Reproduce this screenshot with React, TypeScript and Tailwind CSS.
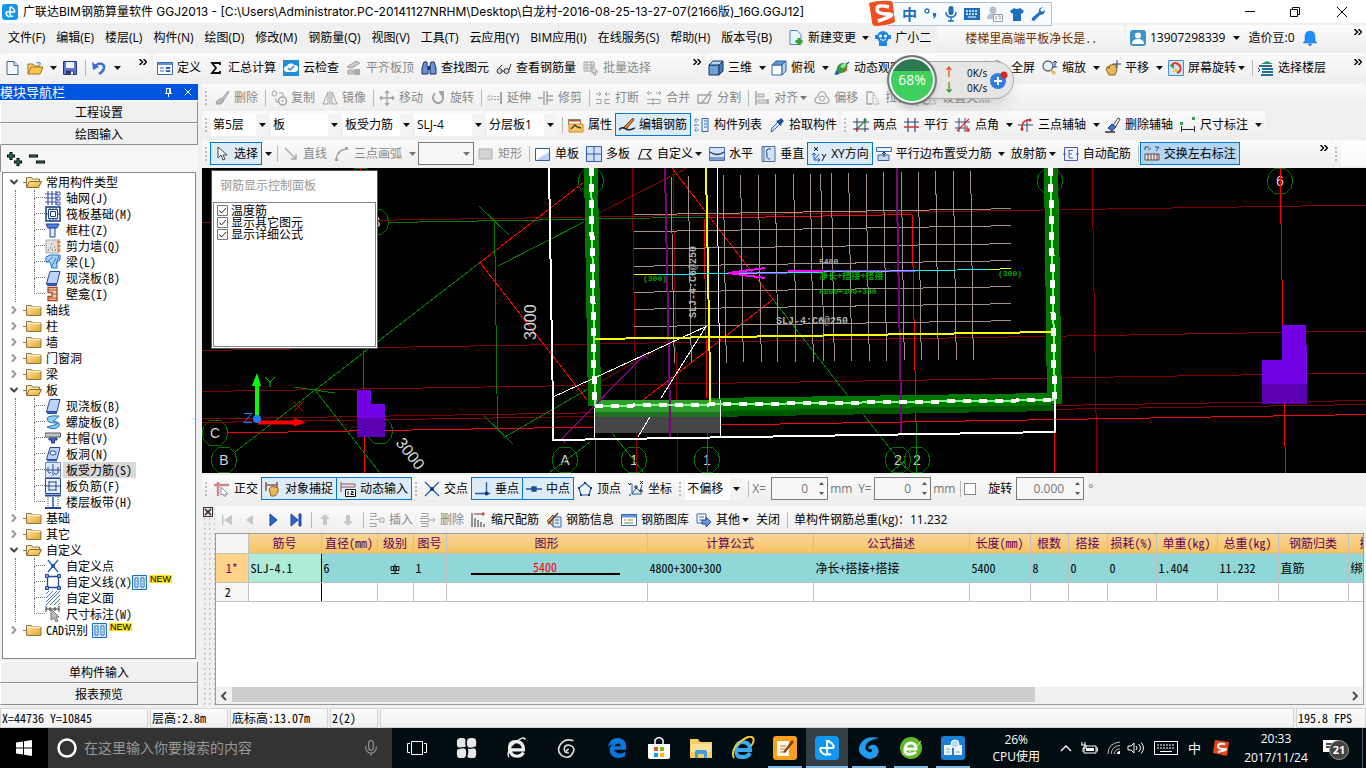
import type { ReactNode } from 'react';
import clsx from 'clsx';
import { ChevronDown, ChevronRight, Mic, X } from 'lucide-react';

const song = "font-['Noto_Sans_CJK_SC',sans-serif] [font-feature-settings:'hwid']";

const gray = '#a3a3a3';
const blue = '#2458b8';

const icons: Record<string, ReactNode> = {
  doc: <><path d="M3 1.500h7l4 4v9H3z" fill="#f4f9ff" stroke="#46648c" /><path d="M10 1.500v4h4" fill="#cfe0f5" stroke="#46648c" /></>,
  open: <><path d="M1 14V4h5l1 2h6v3" fill="#f7d774" stroke="#9a7420" /><path d="M1 14l3-7h12l-3 7z" fill="#fbc74b" stroke="#9a7420" /><path d="M9 3q3-2 5 1l-3 0" fill="none" stroke="#5b8bc4" /></>,
  save: <><path d="M1.500 1.500h13v13h-13z" fill="#5f78d8" stroke="#26358c" /><path d="M4 2h8v6H4z" fill="#eef3ff" /><path d="M4 10.500h8v4H4z" fill="#333c6e" /><path d="M9 11.500h2v3H9z" fill="#fff" /></>,
  undo: <><path d="M4 6q6-5 9 0 1 4-5 8" fill="none" stroke="#3a6fd0" strokeWidth="2.600" /><path d="M1 2l1 8 6-3z" fill="#3a6fd0" /></>,
  define: <><path d="M.5 2.500h15v12H.5z" fill="#fff" stroke="#3a68ae" /><path d="M1 3h14v2H1z" fill="#5e94d8" /><path d="M3 8h4M3 11h4M9 7.500h4v1H9zM9 10.500h4v1H9z" stroke="#3a68ae" fill="none" /></>,
  sigma: <path d="M12 5V3H4l4 5-4 5h8v-2" fill="none" stroke="#111" strokeWidth="1.800" />,
  cloud: <><path d="M0 0h16v16H0z" fill="#1f8ed8" /><path d="M4 12a3 3 0 010-6 4 4 0 017-1 3.500 3.500 0 011 7z" fill="#fff" /><path d="M5 8l2 2 4-4" fill="none" stroke="#1f8ed8" strokeWidth="1.500" /></>,
  alignTop: <><path d="M1 7l9-6 4 2-8 5zM2 10h5v4H2z" fill="#c9c9c9" stroke={gray} /><path d="M8 15V9h6v6z" fill="#aaa" /></>,
  binocular: <><path d="M3 2h3v4l1 2v6H1V8zM10 2h3l2 6v6H9V6z" fill="#6b93d6" stroke="#1b2f63" /><path d="M7 6h2v4H7z" fill="#1b2f63" /></>,
  glasses: <><circle cx="3.500" cy="11" r="2.500" fill="#d5dde8" stroke="#333" /><circle cx="10.500" cy="11" r="2.500" fill="#d5dde8" stroke="#333" /><path d="M6 11h2M3 8l3-3M13 10l2-6" stroke="#333" fill="none" /></>,
  batch: <><path d="M1 2h10v9H1zM1 5h10M1 8h10M4 2v9M8 2v9" fill="none" stroke={gray} /><path d="M9 6l6 6h-3l1 3-2 0-1-3-1 1z" fill="#ddd" stroke={gray} /></>,
  cube: <><path d="M1 5h10v10H1z" fill="#6fa3d8" stroke="#16335a" /><path d="M1 5l4-4h10l-4 4z" fill="#b7d5f0" stroke="#16335a" /><path d="M11 5l4-4v10l-4 4z" fill="#447cb8" stroke="#16335a" /></>,
  cubeTop: <><path d="M1 5h10v10H1z" fill="#fff" stroke="#2c64a8" /><path d="M1 5l4-4h10l-4 4z" fill="#5f97d4" stroke="#2c64a8" /><path d="M11 5l4-4v10l-4 4z" fill="#b4d0ee" stroke="#2c64a8" /></>,
  orbit: <><path d="M1 14L15 2" stroke="#1d5aa8" strokeWidth="1.500" /><ellipse cx="8" cy="8" rx="6" ry="4.500" transform="rotate(-40 8 8)" fill="#2f9c44" /><ellipse cx="9.500" cy="6" rx="3" ry="2" transform="rotate(-40 9 6)" fill="#9be09a" /><path d="M1 15l1-5 4 4z" fill="#1d5aa8" /><path d="M9 12l4-3" stroke="#d64a2a" strokeWidth="2" /></>,
  full: <><circle cx="6" cy="6" r="5" fill="#e2edf8" stroke="#78879a" strokeWidth="1.500" /><path d="M9 10l5 5" stroke="#8a6c42" strokeWidth="2" /></>,
  zoom: <><circle cx="6" cy="6" r="5" fill="#e4f0fa" stroke="#667" strokeWidth="1.300" /><path d="M9 10l4 4" stroke="#e2b860" strokeWidth="3" /><path d="M13 1v6M11 3l2-2 2 2M10 7h5" stroke="#1f3f87" fill="none" /></>,
  hand: <><path d="M1 9l2-3 1 3 1-4 2 0 1-1 1 1 2 0 1 5-2 5H4z" fill="#e9b95d" stroke="#8c6424" /><path d="M12 0v8M8 4h8" stroke="#27427c" /></>,
  rotateScr: <><path d="M.5.500h15v15H.5z" fill="#cfe6fb" stroke="#4b8ed0" /><path d="M4 12l4-4 3 4z" fill="#efc24b" /><path d="M3 6q4-6 9 0 2 5-3 7" fill="none" stroke="#e03b24" strokeWidth="2" /><path d="M1 5h5v4z" fill="#2fa646" /></>,
  floors: <><path d="M3 4l6-3 6 3z" fill="#2c9068" /><path d="M1 6h13M4 9h11M4 12h11M3 15h12" stroke="#246e9c" strokeWidth="1.800" /><path d="M0 8l2 2-2 2" fill="none" stroke="#333" /></>,
  eraser: <><path d="M8 9l6-8 1 1-5 8z" fill="#ccc" stroke={gray} /><path d="M3 11l4-3 3 3-3 3H2z" fill="#b8b8b8" stroke={gray} /></>,
  copy: <><circle cx="3.500" cy="3.500" r="2.500" fill="none" stroke={gray} /><circle cx="11.500" cy="11" r="4" fill="none" stroke={gray} strokeWidth="1.500" /><circle cx="11.500" cy="11" r="1" fill={gray} /><path d="M8 3h4v3M5 8v4h2" fill="none" stroke={gray} /></>,
  mirror: <path d="M6 2v12H1zM10 2v12h5zM8 1v14" fill="none" stroke={gray} />,
  move: <path d="M8 1v14M1 8h14M6 3l2-2 2 2M6 13l2 2 2-2M3 6L1 8l2 2M13 6l2 2-2 2" fill="none" stroke={gray} strokeWidth="1.300" />,
  rotate: <path d="M5 3q-4 5 0 9 6 3 8-3 0-4-3-6M13 7V2H9" fill="none" stroke={gray} strokeWidth="2" />,
  extend: <><path d="M1 6h4v4H1zM7 6.500h5M7 9.500h5" fill="none" stroke={gray} strokeDasharray="2 1" /><path d="M14 2v12" stroke={gray} strokeWidth="2" /></>,
  trim: <path d="M0 8h5M9 6h6M9 10h6M6 1v14M9 1v14" fill="none" stroke={gray} strokeWidth="1.400" />,
  break: <path d="M1 4h5M10 4h5M4 2l2 2-2 2M12 2l-2 2 2 2M1 9.500h5v4H1M15 9.500h-5v4h5" fill="none" stroke={gray} />,
  merge: <path d="M1 3h5M10 3h5M3 1L1 3l2 2M13 1l2 2-2 2M1 9.500h13v4H1M7 8v7" fill="none" stroke={gray} />,
  split: <path d="M1 5h13l-3 8H1zM4 14L14 1M3 14l3-2" fill="none" stroke={gray} strokeWidth="1.400" />,
  align: <><path d="M2 1v14M14 14V9" stroke={gray} strokeWidth="1.500" /><path d="M4 4h6v3H4zM4 10h9v3H4z" fill="#ddd" stroke={gray} /></>,
  offset: <><path d="M8 1.500q4 1 4 5 3 1 3 5-1 2-7 2t-7-2q0-4 3-5 0-4 4-5z" fill="none" stroke={gray} strokeWidth="1.200" /><circle cx="8" cy="8.500" r="2.500" fill="none" stroke={gray} /></>,
  stretch: <><path d="M7 2H2v12h5" fill="none" stroke={gray} strokeWidth="1.300" /><path d="M8 2l6 12H8z" fill="none" stroke={gray} strokeDasharray="2 1" /></>,
  props: <><path d="M.5 2.500h12v5H.5z" fill="#fff" stroke="#8c8268" /><path d="M1 7h14v8H1z" fill="#f4c566" stroke="#d08c1c" /><path d="M3 12l4-4 2 2 4 1" stroke="#4b3a20" fill="none" strokeWidth="1.300" /><path d="M1 3h11v1.500H1z" fill="#c24c30" /></>,
  pencil: <><path d="M4 11L14 1l1 2L7 12z" fill="#d8843e" stroke="#7c3e1a" /><path d="M0 13q3-4 7-1 4 2 9-1" fill="none" stroke="#222" strokeWidth="1.500" /></>,
  list: <><path d="M2 1v14M0 3h5M0 8h5M0 13h5" stroke="#5b7fb4" strokeDasharray="2 1" /><path d="M8 1.500h6v13H8z" fill="#e8f1fd" stroke="#2e60b0" /><path d="M10 4h3M10 7h3M10 10h3" stroke="#2e60b0" /></>,
  dropper: <><path d="M2 15l1-4 6-6 2 2-6 6z" fill="#cfe2f8" stroke="#2c68b8" /><path d="M7 4l5 5 1-3 2-2-3-3-2 2z" fill="#1b4f9c" /></>,
  twoPt: <><path d="M4 1v14M12 1v14M0 5h16M0 12h16" stroke="#2d3a6c" /><path d="M3 13L13 3" stroke="#258c34" strokeWidth="1.300" /><circle cx="4" cy="12" r="1.500" fill="#d02828" /><circle cx="12" cy="3" r="1.500" fill="#258c34" /></>,
  parallel: <><path d="M4 1v14M11 1v14M0 5h15" stroke="#33467c" strokeWidth="1.200" /><path d="M0 10h15" stroke="#c83434" strokeWidth="1.500" /></>,
  ptAngle: <><path d="M4 1v14M10 1v14M0 5h15M0 11h10" stroke="#33467c" /><path d="M2 14L14 2M12 9v3" stroke="#c83434" strokeWidth="1.300" /><circle cx="13" cy="13" r="2" fill="#d64a4a" /></>,
  arc3: <><path d="M9 2v13M0 8h15" stroke="#33467c" /><path d="M4 14Q3 2 12 3" fill="none" stroke="#d02828" strokeWidth="1.500" /><circle cx="4" cy="12" r="1.500" fill="#d02828" /><circle cx="12" cy="3" r="1.500" fill="#d02828" /></>,
  delAux: <><path d="M7 10l6-9 2 1-5 9z" fill="#fff" stroke="#444" /><path d="M3 11l4-4 4 3-4 4z" fill="#3a78cc" stroke="#1d3c7a" /><path d="M0 15h10" stroke="#333" strokeWidth="1.500" /></>,
  dim: <><path d="M1.500 9v6M14.500 9v6M2 12.500h12" stroke="#222" /><path d="M0 5h3v3H0zM12 0h3v3h-3z" fill="#35a648" /></>,
  cursor: <path d="M4 1v11l3-3 2 5 2-1-2-4h4z" fill="#fff" stroke="#444" />,
  line: <path d="M2 2l10 10M13 8v5H8" fill="none" stroke={gray} strokeWidth="1.300" />,
  arc: <><path d="M2 14Q3 4 12 3" fill="none" stroke={gray} strokeWidth="1.300" /><path d="M1 12h3v3H1zM11 1h3v3h-3zM4 6h2v2H4z" fill={gray} /></>,
  rect: <path d="M1 3h13v10H1z" fill="#d2d2d2" stroke="#b0b0b0" />,
  slab: <><path d="M.5 2.500h14v12H.5z" fill="#fdfeff" stroke="#2d5cb0" /><path d="M1 14L14 6v8z" fill="#b9d2f5" /></>,
  multi: <><path d="M.5.500h15v15H.5z" fill="#cfe0f7" stroke="#2d5cb0" /><path d="M8 1v14M1 8h14" stroke="#2d5cb0" /></>,
  poly: <path d="M5 3.500h9l-4 5 4 4.500H1.500z" fill="none" stroke="#222" strokeWidth="1.200" />,
  horiz: <><path d="M.5 1.500h15v13H.5z" fill="#d3e2f7" stroke="#486ba8" /><path d="M1 11h14v3H1z" fill="#7e9dcc" /><path d="M1 6q7 5 14 0" fill="none" stroke="#223c70" strokeWidth="1.300" /></>,
  vert: <><path d="M2 .5h13v15H2z" fill="#d3e2f7" stroke="#486ba8" /><path d="M11 3q-6-1-4 5-1 5 3 5" fill="none" stroke="#223c70" /><path d="M3 1h2v14H3z" fill="#8fabd6" /></>,
  xy: <><path d="M3 1l4 4M7 1L3 5M11 8l2 3M15 8l-4 7" stroke="#111" /><path d="M3 7v7h6M1 9l2-2 2 2M7 12l2 2-2 2M4 13l4-5" stroke={blue} fill="none" /></>,
  edge: <><path d="M.5 1.500h15v4H.5z" fill="#e8f0fc" stroke="#3a62a8" /><path d="M2 14.500V9h11v5.500z" fill="#c7dbf5" stroke="#3a62a8" /><path d="M8 6v5M6 8l2-2 2 2" stroke="#1b2d68" fill="none" /></>,
  auto: <><path d="M1.500 1.500h13v13h-13z" fill="#eef3ff" stroke="#4c58c4" /><path d="M6 4v8M6 4.500h4M6 8h3M6 12h4" stroke="#5960a0" fill="none" /><path d="M0 8h3M13 8h3" stroke="#4c58c4" /></>,
  swap: <><path d="M1 4V1h4M11 1h4M12 5l3-4M4 4l3-2" fill="none" stroke="#3a4668" /><path d="M1 8h14v6H1z" fill="#f4e9e4" stroke="#5a4848" /><path d="M4 8v6M7 8v6M10 8v6M13 8v6" stroke="#5a4848" /></>,
  ortho: <><path d="M0 4h15M4 1v14" stroke="#c98a8a" strokeWidth="2.500" /><path d="M7 6l7 7h-3l1 2-2 0-1-2-2 1z" fill="#fff" stroke="#8890a4" /></>,
  snap: <><path d="M1 1v9M12 1v9M1 4h11" stroke="#9c5050" strokeWidth="1.500" /><path d="M4 8l3-3 6 2v4l-3 4H6z" fill="#e9b95d" stroke="#8c6424" /></>,
  dyn: <><path d="M1 1v10M1 3h14M1 6h14v-3" fill="none" stroke="#9c5050" /><path d="M5.500 8.500h10v7h-10z" fill="#fff" stroke="#111" /><path d="M8 10v4M11 10.500h2v1.500h-2v1.500h3" stroke="#111" fill="none" /></>,
  cross: <><path d="M1 1l14 14M15 1L1 15" stroke="#1d5aa8" strokeWidth="1.300" /><circle cx="8" cy="8" r="2" fill="#113a80" /></>,
  perp: <><path d="M0 12.500h15M11.500 1v13" stroke="#1d5aa8" strokeWidth="1.300" /><circle cx="11.500" cy="12.500" r="2" fill="#113a80" /></>,
  mid: <path d="M0 8h16M6 6h4v4H6z" stroke="#1d4f9c" fill="#1d4f9c" strokeWidth="1.300" />,
  penta: <><path d="M8 2l6 5-2 7H4L2 7z" fill="none" stroke="#1d5aa8" strokeWidth="1.200" /><path d="M7 1h2v2H7zM13 6h2v2h-2zM1 6h2v2H1zM3 13h2v2H3zM11 13h2v2h-2z" fill="#113a80" /></>,
  coord: <><path d="M4 3v10h10M4 13l4-6 4 3 2-6" fill="none" stroke="#1d5aa8" /><path d="M0 2l2 2 1-2M12 0l3 3M15 0l-3 3M1 14h2M7 5h2v2H7zM12 9h2v2h-2z" stroke="#222" fill="none" /></>,
  first: <path d="M3 3v10h1.500V3zM13 3v10L5 8z" fill="#c4c8cc" />,
  prev: <path d="M11 3v10L4 8z" fill="#c4c8cc" />,
  next: <path d="M5 2v12l7-6z" fill="#2b63cc" stroke="#1b469c" />,
  last: <path d="M3 2v12l7-6zM11 2h2v12h-2z" fill="#2b63cc" stroke="#1b469c" />,
  up: <path d="M8 2l5 5h-3v6H6V7H3z" fill="#c4c8cc" />,
  down: <path d="M8 14l5-5h-3V3H6v6H3z" fill="#c4c8cc" />,
  insert: <><path d="M1 1.500h6v3H1M1 7.500h4M1 11.500h6v3H1M6 7.500h4" fill="none" stroke={gray} /><path d="M11 6h4v4h-4z" fill="none" stroke={gray} /></>,
  remove: <path d="M1 1.500h7v3H1M1 11.500h7v3H1M0 6.500h9v3H0M10 8h5M13 6l2 2-2 2" fill="none" stroke={gray} />,
  scale: <><path d="M1 1v14M4 6v9M7 8v7M10 10v5M13 12v3" stroke="#333" /><path d="M3 2h11M12 0v4" stroke="#a02828" /></>,
  info: <><path d="M1 9l6-6 5 5-5 6z" fill="#eab35c" stroke="#7c5424" /><path d="M7 5h8v10H7z" fill="#d9e8fa" stroke="#3d67a8" /><path d="M9 8h4M9 11h4" stroke="#3d67a8" /><path d="M2 12L12 1" stroke="#55383a" strokeWidth="1.500" /></>,
  lib: <><path d="M.5 2.500h15v11H.5z" fill="#fff" stroke="#3a68ae" /><path d="M1 3h14v2.500H1z" fill="#5e94d8" /><path d="M3 8h2M7 8h5" stroke="#b46a20" /><path d="M3 11h9" stroke="#3aa046" /></>,
  other: <><path d="M1 2h9v9H1z" fill="#fff" stroke="#3a68ae" /><path d="M3 5h5M3 8h4" stroke="#3a68ae" /><path d="M6 8h4V5l5 5-5 5v-3H6z" fill="#6a9ae6" stroke="#1d4898" /></>,
  folder: <><path d="M.5 13.500v-10h5l1 1.500h8.500v8.500z" fill="url(#folderFill)" stroke="#8a7648" /><path d="M1 5.500h13.500" stroke="#fff2c0" /></>,
  folderOpen: <><path d="M.5 13.500v-10h5l1 1.500h7v3" fill="#f7e09a" stroke="#8a7648" /><path d="M.5 13.500l3-6H15.500l-3 6z" fill="url(#folderFill)" stroke="#8a6a28" /></>,
  axis: <><path d="M0 4h11M0 8h11M0 12h11M3 1v14M7 1v14M11 1v14" stroke="#3a50b4" strokeWidth="1.200" /><path d="M12 2h3v3h-3zM12 7h3v3h-3zM12 12h3v3h-3z" fill="none" stroke="#3a50b4" /></>,
  raft: <><path d="M1 1h14v14H1z" fill="#fff" stroke="#143f80" strokeWidth="1.500" /><path d="M3.500 3.500h9v9h-9zM5.500 5.500h5v5h-5zM1 8h2M13 8h2M8 1v2M8 13v2M5 1v2M11 1v2M5 13v2M11 13v2" fill="none" stroke="#143f80" /></>,
  column: <><path d="M1 2h13l-2 4H3z" fill="#4c83e0" stroke="#1d3f94" /><path d="M5 6h5v9H5z" fill="#dce9fc" stroke="#1d3f94" /></>,
  wall: <><path d="M1 2h12v13H1z" fill="#e4e0dc" stroke="#aaa" /><path d="M3 12h1M5 10h1M7 12h1M9 9h1M6 6h1M10 12h1" stroke="#444" /><path d="M14 1v14M12 4h4M12 8h4M12 12h4" stroke="#d06a28" /></>,
  beam: <><path d="M1 3l4-2h10v5l-3 2v6H7L5 8H1z" fill="#a8d4f8" stroke="#2872c4" /><path d="M6 14l5-10M2 8l6-5M11 10l3-8" stroke="#2872c4" /></>,
  slabT: <><path d="M5 1.500h10l-3 12H1.500z" fill="#bcd4f7" stroke="#23489c" /><path d="M1.500 13.500h10v2h-9z" fill="#3c6cc4" stroke="#23489c" /></>,
  niche: <><path d="M3 1.500h9v13H3v-4h4v-4H3z" fill="#f6d4b8" stroke="#a8481c" strokeWidth="1.300" /><path d="M3 4h9M7 8h5M3 12h9" stroke="#a8481c" /></>,
  spiral: <path d="M14 2Q2 1 2 5t8 4-8 4q8 4 12-1 2-4-6-5 4-2 6-5z" fill="#8fcbf2" stroke="#2475b8" />,
  cap: <><path d="M0 3h15.500v4H0z" fill="#c4c4c4" stroke="#555" /><path d="M4 8h8v2H9.500v3h-3v-3H4z" fill="#3c6cd0" stroke="#1c3c90" /></>,
  hole: <><path d="M5 1.500h10l-3 12H1.500z" fill="#bcd4f7" stroke="#23489c" /><ellipse cx="8" cy="7" rx="3" ry="2" fill="#fff" stroke="#23489c" /><path d="M2 14h10v1.500H2z" fill="#3c6cc4" /></>,
  slabBar: <><path d="M.5.500h15v15H.5z" fill="#dce6fa" stroke="#7c8db8" /><path d="M0 8h16M8 2v12M3 5v5q2 3 3 0M13 5v6q-2 3-4 0" fill="none" stroke="#2a4d9c" /></>,
  negBar: <path d="M.5.500h15v15H.5zM1 8h14M4 3v10M11 3v10M4 4h7M4 12h7" fill="#eaf0fa" stroke="#23489c" />,
  band: <><path d="M0 1.500h16M0 14h16" stroke="#23489c" strokeWidth="2" /><path d="M3 3v10M13 3v10" stroke="#555" strokeDasharray="1 1" /><path d="M8 3v10" stroke={blue} strokeWidth="1.500" /></>,
  pt: <><path d="M3 2l10 12M13 2L3 14" fill="none" stroke="#2458b8" strokeWidth="1.200" /><path d="M6 6h4v4H6z" fill="#2458b8" /></>,
  ln: <><path d="M2.500 2.500h11v11h-11z" fill="none" stroke="#23489c" strokeWidth="1.300" /><path d="M.5.500h3v3h-3zM12.500.500h3v3h-3zM.5 12.500h3v3h-3zM12.500 12.500h3v3h-3z" fill="#7ca4e8" stroke="#23489c" /></>,
  area: <path d="M1 4l3-3M1 8l7-7M1 12L12 1M1 15L15 1M5 15L15 5M9 15l6-6M13 15l2-2" stroke="#3a78cc" />,
  dimT: <><path d="M1 0v6M14 0v6M1 3h13M5 1v4M10 1v4" stroke="#333" /><path d="M6 3v11l3-2 2 4 2-1-2-4h3z" fill="#bbb" stroke="#777" /></>,
};

const Icon = ({ name }: { name: string }) => (
  <svg viewBox="0 0 16 16" className="h-4 w-4 shrink-0" aria-hidden="true">
    {name.startsWith('folder') && (
      <defs><linearGradient id="folderFill" x1="0" y1="0" x2="1" y2="1"><stop offset="0" stopColor="#fff0b0" /><stop offset="1" stopColor="#e5a022" /></linearGradient></defs>
    )}
    {icons[name]}
  </svg>
);

const Caret = ({ dim }: { dim?: boolean }) => (
  <svg viewBox="0 0 7 4" className="h-1 w-[7px] shrink-0" aria-hidden="true">
    <path d="M0 0h7L3.500 4z" fill={dim ? '#777' : '#111'} />
  </svg>
);

interface ToolProps {
  icon?: string;
  label?: string;
  on?: boolean;
  strong?: boolean;
  off?: boolean;
  menu?: 'inline' | 'split';
}

const Tool = ({ icon, label, on, strong, off, menu }: ToolProps) => (
  <>
    <button
      type="button"
      aria-label={label ?? icon}
      className={clsx(
        '-ml-px flex h-[23px] shrink-0 items-center gap-1 border px-[3px] whitespace-nowrap',
        on ? 'border-[#0078d7]' : 'border-transparent',
        on && (strong ? 'bg-[#b3d7f3]' : 'bg-[#dcebf8]'),
        off ? 'text-[#888]' : 'text-black'
      )}
    >
      {icon && <Icon name={icon} />}
      {label}
      {menu === 'inline' && <span className="-ml-0.5"><Caret dim={off} /></span>}
    </button>
    {menu === 'split' && (
      <button type="button" aria-label={`${label ?? icon} 菜单`} className="flex h-[23px] w-3 shrink-0 items-center justify-center">
        <Caret dim={off} />
      </button>
    )}
  </>
);

const Sep = () => <div className="mr-0.5 ml-[3px] h-4 w-px shrink-0 bg-[#b8b8b8]" />;

const Grip = () => (
  <div className="mr-1 ml-[3px] flex shrink-0 flex-col gap-0.5">
    {[0, 1, 2, 3].map((i) => <span key={i} className="h-[2px] w-[2px] bg-[#bcbcbc]" />)}
  </div>
);

const More = () => (
  <button type="button" aria-label="更多" className="mb-3 flex h-3 w-3 shrink-0 items-center justify-center">
    <svg viewBox="0 0 8 6" className="h-1.5 w-2"><path d="M.5 0l3 3-3 3M4.500 0l3 3-3 3" fill="none" stroke="#000" strokeWidth="1.500" /></svg>
  </button>
);

const Combo = ({ label, options, narrow }: { label: string; options: string[]; narrow?: boolean }) => (
  <div className={clsx('relative mr-[3px] flex h-[22px] shrink-0 items-center bg-white', narrow ? 'w-[57px]' : 'w-[69px]')}>
    <select aria-label={label} className="h-full w-full appearance-none bg-transparent pl-0.5">
      {options.map((o) => <option key={o}>{o}</option>)}
    </select>
    <span className="pointer-events-none absolute top-0 right-0 flex h-full w-3 items-center justify-center bg-[#f3f3f3]"><Caret /></span>
  </div>
);

const bar = 'flex items-center rounded-sm bg-linear-to-b from-[#fbfbfb] to-[#eeeeee]';

const menus = ['文件(F)', '编辑(E)', '楼层(L)', '构件(N)', '绘图(D)', '修改(M)', '钢筋量(Q)', '视图(V)', '工具(T)', '云应用(Y)', 'BIM应用(I)', '在线服务(S)', '帮助(H)', '版本号(B)'];

const TitleBar = () => (
  <header className="flex h-[23px] items-center bg-white pl-0.5">
    <svg viewBox="0 0 16 16" className="h-4 w-4"><rect width="16" height="16" rx="3" fill="#1296f0" /><path d="M8 3v7q0 3 3 2M4 8h9M4 8q0 4 4 5M8 3q4 1 5 5M8 3h2" fill="none" stroke="#fff" strokeWidth="1.500" /></svg>
    <h1 className="ml-[5px] flex-1 truncate font-['Inter','Noto_Sans_CJK_SC',sans-serif] text-[12px]">广联达BIM钢筋算量软件 GGJ2013 - [C:\Users\Administrator.PC-20141127NRHM\Desktop\白龙村-2016-08-25-13-27-07(2166版)_16G.GGJ12]</h1>
    <button type="button" aria-label="最小化" className="flex h-5 w-[45px] items-center justify-center"><span className="h-px w-[10px] bg-black" /></button>
    <button type="button" aria-label="还原" className="flex h-5 w-[46px] items-center justify-center">
      <svg viewBox="0 0 10 10" className="h-[10px] w-[10px]"><path d="M.5 2.500h7v7h-7zM2.500 2V.5h7v7H8" fill="none" stroke="#000" /></svg>
    </button>
    <button type="button" aria-label="关闭" className="flex h-5 w-12 items-center justify-center">
      <svg viewBox="0 0 10 10" className="h-[10px] w-[10px]"><path d="M0 0l10 10M10 0L0 10" stroke="#000" /></svg>
    </button>
  </header>
);

const MenuBar = () => (
  <div className="flex h-[30px] items-center">
    <nav className="flex shrink-0 gap-[11px] pl-2 whitespace-nowrap">
      {menus.map((m) => <button type="button" key={m}>{m}</button>)}
    </nav>
    <div className="ml-4 flex shrink-0 items-center pr-1.5">
      <button type="button" className="flex items-center gap-1">
        <svg viewBox="0 0 16 16" className="h-4 w-4"><path d="M2 .5h7l4 4v10H2z" fill="#e9f4ff" stroke="#4a88c8" /><path d="M11 8v7M7.500 11.500h7" stroke="#36a02c" strokeWidth="3" /></svg>
        新建变更
      </button>
      <span className="mx-1.5"><Caret /></span>
      <button type="button" className="flex items-center gap-1">
        <svg viewBox="0 0 16 16" className="h-4 w-4"><circle cx="8" cy="7" r="6" fill="#1f86e0" /><path d="M0 5h3v4H0zM13 5h3v4h-3zM4 12h8v4H4z" fill="#1f86e0" /><circle cx="5.500" cy="6" r="1.500" fill="#fff" /><circle cx="10.500" cy="6" r="1.500" fill="#fff" /><path d="M5 9q3 3 6 0" stroke="#fff" fill="none" /></svg>
        广小二
      </button>
    </div>
    <a href="#tip" className={clsx('flex h-[27px] min-w-0 flex-1 items-center truncate bg-linear-to-b from-[#fafafa] to-[#eee] pl-7 text-[#6b2f00]', song)}>楼梯里高端平板净长是..</a>
    <div className={clsx(bar, 'ml-0.5 h-[27px] w-[240px] shrink-0 gap-1 pl-1')}>
      <svg viewBox="0 0 16 16" className="h-4 w-4"><rect width="16" height="16" rx="3" fill="#3d93cc" /><circle cx="8" cy="5.500" r="3" fill="#fff" /><path d="M2 14q0-5 6-5t6 5z" fill="#fff" /></svg>
      <span>13907298339</span>
      <span className="mr-1 ml-1"><Caret /></span>
      <span>造价豆:0</span>
      <svg viewBox="0 0 14 16" className="ml-1 h-4 w-[14px]"><path d="M7 1q5 0 5 6v4l2 2H0l2-2V7q0-6 5-6zM5 14h4l-2 2z" fill="#1e8fff" stroke="#1565c0" strokeWidth=".5" /></svg>
      <span className="mr-0.5 ml-auto"><More /></span>
    </div>
  </div>
);

const MainTools = () => (
  <div className="flex h-[30px]">
    <div className={clsx(bar, 'w-[151px] shrink-0 pl-[1px]')}>
      <Tool icon="doc" /><Tool icon="open" menu="split" /><Tool icon="save" /><Sep /><Tool icon="undo" menu="split" />
      <span className="mr-0.5 ml-auto"><More /></span>
    </div>
    <div className={clsx(bar, 'ml-0.5 w-[550px] shrink-0 pl-px')}>
      <Tool icon="define" label="定义" />
      <Tool icon="sigma" label="汇总计算" />
      <Tool icon="cloud" label="云检查" />
      <Tool icon="alignTop" label="平齐板顶" off />
      <Tool icon="binocular" label="查找图元" />
      <Tool icon="glasses" label="查看钢筋量" />
      <Tool icon="batch" label="批量选择" off />
      <span className="ml-auto"><More /></span>
    </div>
    <div className={clsx(bar, 'ml-0.5 min-w-0 flex-1')}>
      <Tool icon="cube" label="三维" menu="split" />
      <Tool icon="cubeTop" label="俯视" menu="split" />
      <Tool icon="orbit" label="动态观察" menu="split" />
      <div className="w-16 shrink-0" />
      <Sep />
      <Tool icon="full" label="全屏" />
      <Tool icon="zoom" label="缩放" menu="split" />
      <Tool icon="hand" label="平移" menu="split" />
      <Tool icon="rotateScr" label="屏幕旋转" menu="inline" />
      <Sep />
      <Tool icon="floors" label="选择楼层" />
      <span className="mr-0.5 ml-auto"><More /></span>
    </div>
  </div>
);

const EditTools = () => (
  <div className={clsx(bar, 'h-[27px]')}>
    <Grip />
    <Tool icon="eraser" label="删除" off /><Sep />
    <Tool icon="copy" label="复制" off /><Tool icon="mirror" label="镜像" off /><Sep />
    <Tool icon="move" label="移动" off /><Tool icon="rotate" label="旋转" off /><Sep />
    <Tool icon="extend" label="延伸" off /><Tool icon="trim" label="修剪" off /><Sep />
    <Tool icon="break" label="打断" off /><Tool icon="merge" label="合并" off /><Tool icon="split" label="分割" off /><Sep />
    <Tool icon="align" label="对齐" off menu="inline" /><Tool icon="offset" label="偏移" off /><Tool icon="stretch" label="拉伸" off /><Sep />
    <Tool icon="stretch" label="设置夹点" off />
  </div>
);

const PartTools = () => (
  <div className="flex h-[27px]">
    <div className={clsx(bar, 'w-[637px] shrink-0')}>
      <Grip />
      <Combo label="楼层" narrow options={['第5层', '第4层']} />
      <Combo label="构件类型" options={['板', '梁', '柱']} />
      <Combo label="构件" options={['板受力筋', '板负筋']} />
      <Combo label="名称" options={['SLJ-4', 'SLJ-3']} />
      <Combo label="分层" options={['分层板1', '分层板2']} />
      <Sep />
      <Tool icon="props" label="属性" />
      <Tool icon="pencil" label="编辑钢筋" on />
      <Tool icon="list" label="构件列表" />
      <Tool icon="dropper" label="拾取构件" />
    </div>
    <div className={clsx(bar, 'ml-0.5 w-[424px]')}>
      <Grip />
      <Tool icon="twoPt" label="两点" />
      <Tool icon="parallel" label="平行" />
      <Tool icon="ptAngle" label="点角" menu="split" />
      <Tool icon="arc3" label="三点辅轴" menu="split" />
      <Tool icon="delAux" label="删除辅轴" />
      <Tool icon="dim" label="尺寸标注" menu="split" />
    </div>
  </div>
);

const DrawTools = () => (
  <div className="mt-0.5 flex h-[27px]">
    <div className={clsx(bar, 'min-w-0 flex-1')}>
      <Grip />
      <Tool icon="cursor" label="选择" on menu="split" /><Sep />
      <Tool icon="line" label="直线" off />
      <Tool icon="arc" label="三点画弧" off menu="split" />
      <div className="relative mr-px flex h-[23px] w-14 shrink-0 items-center border border-[#7a7a7a] bg-[#f7f7f7]">
        <select aria-label="画弧参数" disabled className="h-full w-full appearance-none bg-transparent"><option></option></select>
        <span className="pointer-events-none absolute right-[3px] flex h-full items-center"><Caret dim /></span>
      </div>
      <Tool icon="rect" label="矩形" off /><Sep />
      <Tool icon="slab" label="单板" />
      <Tool icon="multi" label="多板" />
      <Tool icon="poly" label="自定义" menu="inline" />
      <Tool icon="horiz" label="水平" />
      <Tool icon="vert" label="垂直" />
      <Tool icon="xy" label="XY方向" on />
      <Tool icon="edge" label="平行边布置受力筋" menu="split" />
      <Tool label="放射筋" menu="inline" />
      <Tool icon="auto" label="自动配筋" /><Sep />
      <Tool icon="swap" label="交换左右标注" on strong />
      <span className="mr-0.5 ml-auto"><More /></span>
    </div>
    <div className={clsx(bar, 'w-[34px] shrink-0')}><Grip /><div className="h-[25px] flex-1 bg-white/70" /></div>
  </div>
);

type Leaf = { icon: string; label: string; selected?: boolean; isNew?: boolean };
type Branch = { label: string; isNew?: boolean; items?: Leaf[] };

const tree: Branch[] = [
  { label: '常用构件类型', items: [
    { icon: 'axis', label: '轴网(J)' }, { icon: 'raft', label: '筏板基础(M)' }, { icon: 'column', label: '框柱(Z)' },
    { icon: 'wall', label: '剪力墙(Q)' }, { icon: 'beam', label: '梁(L)' }, { icon: 'slabT', label: '现浇板(B)' }, { icon: 'niche', label: '壁龛(I)' },
  ] },
  { label: '轴线' }, { label: '柱' }, { label: '墙' }, { label: '门窗洞' }, { label: '梁' },
  { label: '板', items: [
    { icon: 'slabT', label: '现浇板(B)' }, { icon: 'spiral', label: '螺旋板(B)' }, { icon: 'cap', label: '柱帽(V)' }, { icon: 'hole', label: '板洞(N)' },
    { icon: 'slabBar', label: '板受力筋(S)', selected: true }, { icon: 'negBar', label: '板负筋(F)' }, { icon: 'band', label: '楼层板带(H)' },
  ] },
  { label: '基础' }, { label: '其它' },
  { label: '自定义', items: [
    { icon: 'pt', label: '自定义点' }, { icon: 'ln', label: '自定义线(X)', isNew: true }, { icon: 'area', label: '自定义面' }, { icon: 'dimT', label: '尺寸标注(W)' },
  ] },
  { label: 'CAD识别', isNew: true },
];

const NewBadge = () => (
  <span className="flex items-center">
    <svg viewBox="0 0 15 15" className="h-[15px] w-[15px]"><path d="M.5.500h14v14H.5z" fill="#cfe6ff" stroke="#1f6fc8" /><path d="M3 3h3v9H3zM9 3h3v9H9z" fill="#fff" stroke="#1f6fc8" /><path d="M4 6h1M4 9h1M10 6h1M10 9h1" stroke="#1f6fc8" /></svg>
    <span className="mb-1.5 ml-0.5 bg-[#ffe100] px-px font-['Liberation_Sans'] text-[9px] leading-[8px]">NEW</span>
  </span>
);

const panelButton = 'flex h-[22px] shrink-0 items-center justify-center border border-[#fff] border-r-[#8f8f8f] border-b-[#8f8f8f] bg-[#f0f0f0] leading-[18px]';

const Sidebar = () => (
  <aside className={clsx('flex w-[198px] shrink-0 flex-col', song)}>
    <div className="flex h-4 items-center bg-[#0055e0] pr-1 text-white">
      <h2 className="flex-1 text-[13px] leading-4">模块导航栏</h2>
      <button type="button" aria-label="固定" className="mr-[9px]">
        <svg viewBox="0 0 9 9" className="h-[9px] w-[9px]"><path d="M2.500 5V.5h4V5M1 5.500h7M4.500 5v4M5.500 1v4" fill="none" stroke="#fff" /></svg>
      </button>
      <button type="button" aria-label="关闭"><X className="h-3 w-3" strokeWidth={2} /></button>
    </div>
    <button type="button" className={clsx(panelButton, 'mt-px')}>工程设置</button>
    <button type="button" className={panelButton}>绘图输入</button>
    <div className="flex h-[27px] items-center gap-1.5 border-l border-[#8f8f8f] bg-[#f6f6f6] pl-1.5">
      <button type="button" aria-label="全部展开">
        <svg viewBox="0 0 16 14" className="h-[14px] w-4"><path d="M4 0v8M0 4h8M11 6v8M7 10h8" stroke="#000" strokeWidth="3" /><path d="M4 1v6M1 4h6M11 7v6M8 10h6" stroke="#2a9a86" strokeWidth="1" /></svg>
      </button>
      <button type="button" aria-label="全部折叠">
        <svg viewBox="0 0 16 14" className="h-[14px] w-4"><path d="M0 4h9M7 10h9" stroke="#000" strokeWidth="3" /><path d="M1 4h7M8 10h7" stroke="#2a9a86" /></svg>
      </button>
    </div>
    <ul className="mr-0.5 ml-0.5 flex-1 border border-[#828790] bg-white pt-px pl-[5px]">
      {tree.map((b) => (
        <li key={b.label}>
          <div className="flex h-4 items-center">
            {b.items ? <ChevronDown className="h-3 w-3 text-[#444]" strokeWidth={4} /> : <ChevronRight className="h-3 w-3 text-[#999]" strokeWidth={4} />}
            <span className="mr-px ml-[3px] w-0.5 border-t border-dotted border-[#777]" />
            <Icon name={b.items ? 'folderOpen' : 'folder'} />
            <span className="mr-1 ml-1">{b.label}</span>
            {b.isNew && <NewBadge />}
          </div>
          {b.items && (
            <ul>
              {b.items.map((leaf, i) => (
                <li key={leaf.label} className="flex h-4 items-center pl-[7px]">
                  <span className="h-4 w-[19px] border-l border-dotted border-[#777]" />
                  <span className="flex h-4 w-[11px] flex-col">
                    <span className="h-2 border-b border-l border-dotted border-[#777]" />
                    {i < (b.items?.length ?? 0) - 1 && <span className="h-2 border-l border-dotted border-[#777]" />}
                  </span>
                  <Icon name={leaf.icon} />
                  <span className={clsx('ml-0.5 h-4 pl-[3px] leading-4', leaf.selected && 'bg-[#d9d9d9] pr-1')}>{leaf.label}</span>
                  {leaf.isNew && <NewBadge />}
                </li>
              ))}
            </ul>
          )}
        </li>
      ))}
    </ul>
    <button type="button" className={clsx(panelButton, 'mt-0.5')}>单构件输入</button>
    <button type="button" className={panelButton}>报表预览</button>
  </aside>
);

const rebarRows = [[214.7, 208.7], [231.7, 225.7], [249, 243.7], [266.3, 260.7], [292.3, 286.7], [309.3, 303.7], [326.7, 320.7]];
const rebarCols = [[671, 674.3], [688.3, 691.3], [723.3, 726.3], [740.7, 743.3], [758.3, 761.3], [775.3, 778], [793.7, 796], [810.3, 813.3], [820.7, 824], [831.3, 834.3], [848.7, 851.7], [866, 869.3], [883.3, 886.7], [901.3, 904.3], [918.3, 921.3], [935.7, 938.3], [953.3, 956.3], [970.7, 973.3]];
const bubbles = [[215, 433, 'C'], [224, 460, 'B'], [565, 460, 'A'], [634, 460, '1'], [707, 460, '1'], [898, 460, '2'], [917, 460, '2'], [1280, 181, '6'], [376, 222, 'B'], [380, 431, ''], [591, 181, ''], [1050, 181, ''], [361, 181, '']] as const;

const Drawing = () => (
  <svg viewBox="202 168 1164 305" preserveAspectRatio="xMinYMin slice" className="block h-full w-full" shapeRendering="crispEdges" role="img" aria-label="板受力筋平面图">
    {bubbles.map(([x, y, t]) => (
      <g key={`${x}-${y}`}>
        <path d={`M${x - 13} ${y}l2-7 5-5 6-1 6 1 5 5 2 7-2 7-5 5-6 1-6-1-5-5z`} fill="none" stroke="#007400" />
        <text x={x} y={y + 5} textAnchor="middle" fill="#d4d4d4" fontFamily="Liberation Sans" fontSize="14">{t}</text>
      </g>
    ))}
    <g fill="none" stroke="#800000">
      <path d="M202 223L1366 205M202 350.500L1366 331M202 391.500L1366 373M202 419L1366 400.500M202 422.500L1366 404.500" />
      <path d="M632 168L637 473M673 168L678 473M1092 168L1097 473M687 168L597 214M600 382L670 342" />
    </g>
    <g fill="none" stroke="#f00">
      <path d="M227 433L1366 414.500M363 348L364.500 473M360.500 168v4M1280 168L1285.500 473M595 438v35M1054.500 432v41" />
      <path d="M584 182L480 262.500L587 400M672 168L773 299.500L643 400M704 218L707 398M707 218L912 214.500L916 422" />
    </g>
    <g fill="none" stroke="#008000">
      <path d="M480 262.500L235 452M479 206L509 235M494.500 220L497.500 428M389 222.500L599 219M498 266L584 222M483 415L513 444M503 438L588 389" />
      <path d="M294 387L335 393M315 390L380 473M549 473L590 442M597 218.500L707 217.500M773 299.500L848 396M863 414L907 470M612 433L644 473M707 432v41M916.500 422v51M890 473L906 460" />
    </g>
    <g stroke="#a09088">
      {rebarRows.map(([a, b]) => <line key={a} x1="634" y1={a} x2="1011" y2={b} />)}
      {rebarCols.map(([a, b], i) => <line key={a} x1={a} y1={176 - i * 0.3} x2={b} y2={363 - i * 0.2} />)}
    </g>
    <path d="M584 168h14l3 238h-13z" fill="#007800" />
    <path d="M1044 168h14l4 236h-15z" fill="#007800" />
    <path d="M710 398L1051 393v17L710 415z" fill="#007800" />
    <path d="M710 411L1055 405v6L710 417z" fill="#005800" />
    <path d="M595 400h126v15H595z" fill="#2ea02e" />
    <path d="M595 412h126v5H595z" fill="#237023" />
    <path d="M595 417h126v16H595z" fill="#454545" />
    <g fill="none" stroke="#800080">
      <path d="M665 168L670.500 438M896.500 168L901.500 434" strokeWidth="2" />
      <path d="M647 359L644 355L562 439l3 4" strokeWidth="1.500" />
      <path d="M670 438h6M901 434h6" stroke="#ff80ff" strokeWidth="2" />
    </g>
    <g fill="none" stroke="#fff">
      <path d="M549 168L553.500 440L1055 432v-32" strokeWidth="2" />
      <path d="M717 168L720.500 437M594.500 408v32M553 397L706 326.500L661 398M650 417L638 437" />
    </g>
    <path d="M706 168L710.500 403M593 339L1053 332" stroke="#ff0" strokeWidth="2" />
    <g fill="none">
      <path d="M591 168L595 406L1055 400L1050.500 168" stroke="#80ff80" strokeWidth="2" />
      <path d="M591 168L594.500 403M1050.500 168L1054.500 399" stroke="#fff" strokeWidth="5" strokeDasharray="8 8" />
      <path d="M595 406L1055 400" stroke="#fff" strokeWidth="4" strokeDasharray="8 8" />
    </g>
    <path d="M728 273.500l60-1M788 271.500L917 270.500" stroke="#f0f" strokeWidth="2" fill="none" />
    <path d="M657 274.500L990 269.500" stroke="#0ff" />
    <path d="M634 274.500h23M990 269.500l21-1" stroke="#ff0" />
    <path d="M765 268L728 273l37 5" stroke="#f0f" strokeWidth="2" fill="none" />
    <path d="M357 390h14v14h14v14h-28zM1282 325h24v20h1v39h-45v-24h20z" fill="#7400e6" />
    <path d="M357 418h29l-1 19h-28zM1262 384h45v20h-45z" fill="#5c00b4" />
    <g shapeRendering="auto">
      <g fill="#d8d8d8" fontFamily="Liberation Sans">
        <text fontSize="16" transform="translate(536 340) rotate(-90)">3000</text>
        <text fontSize="16" transform="translate(395 443) rotate(52)">3000</text>
      </g>
      <g fill="#b4b0ac" fontFamily="Liberation Mono" fontSize="10" fontWeight="bold">
        <text x="776" y="324">SLJ-4:C6@250</text>
        <text transform="translate(696 318) rotate(-90)">SLJ-4:C6@250</text>
        <text x="819" y="264" fontSize="8">5400</text>
      </g>
      <g fill="#00a800" fontFamily="Liberation Mono" fontSize="8" fontWeight="bold">
        <text x="643" y="281">(300)</text>
        <text x="998" y="276">(300)</text>
        <text x="819" y="279" fontSize="9" fontFamily="Noto Sans CJK SC">净长+搭接+搭接</text>
        <text x="819" y="294">4800+300+300</text>
      </g>
      <path d="M257 418V384" stroke="#0f0" strokeWidth="4" />
      <path d="M252 386l5-13 4 13z" fill="#0f0" />
      <path d="M258 422.500h40" stroke="#f00" strokeWidth="4" />
      <path d="M294 418l12 4.500-12 4z" fill="#f00" />
      <circle cx="257" cy="419" r="4" fill="#1080ff" />
      <path d="M265 377l5 5 5-5M270 382v5" stroke="#0c0" fill="none" />
      <path d="M294 402l9 9M303 402l-9 9" stroke="#c00" />
      <path d="M244 413.500h8l-8 9h8" stroke="#1080ff" fill="none" />
    </g>
  </svg>
);

const DisplayPanel = () => (
  <div className="absolute top-0.5 left-[9px] flex h-[179px] w-[167px] flex-col border border-[#555] bg-white">
    <h3 className="h-[31px] pl-2 leading-[30px] text-[#999]">钢筋显示控制面板</h3>
    <div className={clsx('m-px mt-0 flex-1 border border-[#828790] pt-px pl-[3px]', song)}>
      {['温度筋', '显示其它图元', '显示详细公式'].map((t) => (
        <label key={t} className="flex h-3 items-center gap-[3px]">
          <input type="checkbox" defaultChecked className="sr-only" />
          <svg viewBox="0 0 11 11" className="h-[11px] w-[11px]"><path d="M.5.500h10v10H.5z" fill="#fff" stroke="#777" /><path d="M2.500 5.500L4.500 8l4.500-5" fill="none" stroke="#222" /></svg>
          {t}
        </label>
      ))}
    </div>
  </div>
);

const Spin = ({ id, value, wide }: { id: string; value: string; wide?: boolean }) => (
  <span className={clsx('flex h-[23px] shrink-0 items-center border border-[#7a7a7a] bg-[#f7f7f7]', wide ? 'w-[68px]' : 'w-[57px]')}>
    <input id={id} defaultValue={value} className="w-0 flex-1 bg-transparent text-right text-[#777] outline-none" />
    <svg viewBox="0 0 7 15" className="mr-0.5 ml-2.5 h-[15px] w-[7px] shrink-0"><path d="M1 4l2.500-3L6 4zM1 11l2.500 3L6 11z" fill="#555" /></svg>
  </span>
);

const SnapBar = () => (
  <div className={clsx(bar, 'mt-0.5 h-[27px] w-[886px]')}>
    <Grip />
    <Tool icon="ortho" label="正交" />
    <Tool icon="snap" label="对象捕捉" on />
    <Tool icon="dyn" label="动态输入" on />
    <Grip />
    <Tool icon="cross" label="交点" />
    <Tool icon="perp" label="垂点" on />
    <Tool icon="mid" label="中点" on />
    <Tool icon="penta" label="顶点" />
    <Tool icon="coord" label="坐标" />
    <Grip />
    <Combo label="偏移方式" narrow options={['不偏移', '正交偏移']} />
    <Sep />
    <label htmlFor="dx" className="ml-px w-[19px] shrink-0 text-[#777]">X=</label><Spin id="dx" value="0" />
    <span className="ml-0.5 w-7 shrink-0 text-[#777]">mm</span>
    <label htmlFor="dy" className="w-4 shrink-0 text-[#777]">Y=</label><Spin id="dy" value="0" />
    <span className="ml-0.5 w-6 shrink-0 text-[#777]">mm</span>
    <Sep />
    <input id="rot" type="checkbox" className="mr-3 ml-px h-3 w-3 shrink-0 appearance-none border border-[#888] bg-white" />
    <label htmlFor="rot" className="mr-1 shrink-0 whitespace-nowrap">旋转</label>
    <Spin id="angle" value="0.000" wide />
    <label htmlFor="angle" className="ml-1 text-[#777]">°</label>
  </div>
);

const GridTools = () => (
  <div className={clsx(bar, 'h-[27px] pl-px')}>
    <Tool icon="first" /><Tool icon="prev" /><Tool icon="next" /><Tool icon="last" /><Sep />
    <Tool icon="up" /><Tool icon="down" /><Sep />
    <Tool icon="insert" label="插入" off />
    <Tool icon="remove" label="删除" off />
    <Tool icon="scale" label="缩尺配筋" />
    <Tool icon="info" label="钢筋信息" />
    <Tool icon="lib" label="钢筋图库" />
    <Tool icon="other" label="其他" menu="inline" />
    <Tool label="关闭" />
    <Sep />
    <span className="ml-1 whitespace-nowrap">单构件钢筋总重(kg)：11.232</span>
  </div>
);

const columns = ['筋号', '直径(mm)', '级别', '图号', '图形', '计算公式', '公式描述', '长度(mm)', '根数', '搭接', '损耗(%)', '单重(kg)', '总重(kg)', '钢筋归类'];

const RebarTable = () => (
  <table className={clsx('w-full table-fixed border-collapse', song)}>
    <colgroup>
      <col className="w-8" /><col className="w-[73px]" /><col className="w-14" /><col className="w-9" /><col className="w-[33px]" />
      <col className="w-[201px]" /><col className="w-[166px]" /><col className="w-[156px]" /><col className="w-[61px]" /><col className="w-[38px]" />
      <col className="w-[39px]" /><col className="w-[49px]" /><col className="w-[61px]" /><col className="w-[61px]" /><col className="w-[70px]" /><col />
    </colgroup>
    <thead>
      <tr className="h-[19px] bg-linear-to-b from-[#f9d698] to-[#f4c25e] text-[#600058]">
        <th aria-label="序号" className="border-r border-b border-[#c0c0c0] bg-[#f4f4f4]" />
        {columns.map((c) => <th key={c} scope="col" className="border-r border-b border-[#c0c0c0] p-0 font-normal whitespace-nowrap">{c}</th>)}
        <th scope="col" className="overflow-hidden border-b border-[#c0c0c0] p-0 pl-[11px] text-left font-normal whitespace-nowrap">搭接形式</th>
      </tr>
    </thead>
    <tbody>
      <tr className="h-[29px] bg-[#90d7d8]">
        <th scope="row" className="border-r border-b border-[#c0c0c0] bg-[#ffd48a] p-0 font-normal text-[#600058]">1*</th>
        <td className="border-r border-b border-[#c0c0c0] border-r-black bg-[#aeecd8] p-0 pl-0.5">SLJ-4.1</td>
        <td className="border-r border-b border-[#c0c0c0] p-0 pl-0.5">6</td>
        <td className="border-r border-b border-[#c0c0c0] p-0 text-center">
          <svg viewBox="0 0 10 12" className="inline h-3 w-[10px]"><path d="M5 1v10M1 3.500h8v4H1zM1 10.500h8M3.500 3v5M6.500 3v5" fill="none" stroke="#111" /></svg>
        </td>
        <td className="border-r border-b border-[#c0c0c0] p-0 pl-0.5">1</td>
        <td className="border-r border-b border-[#c0c0c0] p-0 pr-[27px] pl-6 text-center text-[#f00]"><span className="block border-b-2 border-black leading-[13px]">5400</span></td>
        {['4800+300+300', '净长+搭接+搭接', '5400', '8', '0', '0', '1.404', '11.232', '直筋'].map((v, i) => (
          <td key={i} className="border-r border-b border-[#c0c0c0] p-0 pl-0.5 whitespace-nowrap">{v}</td>
        ))}
        <td className="overflow-hidden border-b border-[#c0c0c0] p-0 pl-0.5 whitespace-nowrap">绑扎</td>
      </tr>
      <tr className="h-[19px]">
        <th scope="row" className="border-r border-b border-[#c0c0c0] bg-[#f6f6f6] p-0 pr-2 font-normal">2</th>
        <td className="border-r border-b border-[#c0c0c0] border-r-black" />
        {columns.slice(1).map((c) => <td key={c} className="border-r border-b border-[#c0c0c0]" />)}
        <td className="border-b border-[#c0c0c0]" />
      </tr>
    </tbody>
  </table>
);

const RebarPanel = () => (
  <section className="mt-1 flex min-h-0 flex-1">
    <div className="w-[13px] shrink-0 bg-[radial-gradient(circle,#c4c4c4_1px,transparent_1px)] bg-size-[5px_5px]">
      <button type="button" aria-label="关闭面板" className="mt-px ml-px block h-[10px] w-[10px] border border-[#333] bg-[#f4dcdc]">
        <svg viewBox="0 0 8 8" className="h-2 w-2"><path d="M1 1l6 6M7 1L1 7" stroke="#222" strokeWidth="1.500" /></svg>
      </button>
    </div>
    <div className="flex min-w-0 flex-1 flex-col">
      <GridTools />
      <div className="mr-0.5 flex flex-1 flex-col overflow-hidden border border-[#9a9a9a] bg-white">
        <RebarTable />
        <div className="mt-auto flex h-[17px] items-center bg-[#f0f0f0]">
          <svg viewBox="0 0 16 16" className="h-4 w-4 shrink-0"><path d="M10 4L6 8l4 4" fill="none" stroke="#444" strokeWidth="1.800" /></svg>
          <div className="h-full flex-1"><div className="h-[15px] w-[72%] bg-[#cdcdcd]" /></div>
          <svg viewBox="0 0 16 16" className="h-4 w-4 shrink-0"><path d="M6 4l4 4-4 4" fill="none" stroke="#444" strokeWidth="1.800" /></svg>
        </div>
      </div>
    </div>
  </section>
);

const statusCell = 'flex h-5 shrink-0 items-center border border-[#d4d4d4] bg-linear-to-b from-[#fcfcfc] to-[#f1f1f1] px-px whitespace-nowrap';

const StatusBar = () => (
  <footer className={clsx('mt-[2px] flex h-[21px] items-center gap-0.5', song)}>
    <span className={clsx(statusCell, 'w-[148px]')}>X=44736 Y=10845</span>
    <span className={clsx(statusCell, 'w-[78px]')}>层高:2.8m</span>
    <span className={clsx(statusCell, 'w-[98px]')}>底标高:13.07m</span>
    <span className={clsx(statusCell, 'w-12')}>2(2)</span>
    <span className={clsx(statusCell, 'flex-1')} />
    <span className={clsx(statusCell, 'w-[70px]')}>195.8 FPS</span>
  </footer>
);

const pinned = [
  { name: '风扇', art: <><g fill="#e8e8e8"><rect x="1" y="1" width="10" height="11" rx="4" /><rect x="12" y="1" width="10" height="11" rx="4" /><rect x="1" y="12" width="10" height="11" rx="4" /><rect x="12" y="12" width="10" height="11" rx="4" /></g><path d="M11 2q-1 5 1 10t-1 10M2 13q5-2 10-1t9-1" fill="none" stroke="#0a1216" strokeWidth="1.300" /></> },
  { name: '浏览器', art: <><path d="M5 14h14q0-9-8-9T4 13t8 8q5 0 7-4" fill="none" stroke="#eee" strokeWidth="3.500" /><path d="M3 22Q0 14 10 6T21 3" fill="none" stroke="#eee" strokeWidth="1.500" /></> },
  { name: '广联达', art: <path d="M19 4q-9-3-14 4t1 12q8 5 12-2t-3-9q-6-1-6 4t5 4M14 13q-3 1-2 3" fill="none" stroke="#ddd" strokeWidth="1.800" /> },
  { name: 'Edge', art: <path d="M2 11Q4 1 13 1q9 1 9 9v4H9q1 4 6 4 3 0 6-2v5q-4 2-8 2-9-1-9-9 0-4 4-6Q5 8 2 11zM9 10h7q0-3-3-3t-4 3z" fill="#0a78dc" /> },
];

const apps = [
  { name: '商店', state: '', art: <><path d="M1 8h22v13q0 2-2 2H3q-2 0-2-2z" fill="#fff" /><path d="M8 8V4q4-5 8 0v4" fill="none" stroke="#fff" strokeWidth="1.500" /><path d="M7 11h4v4H7z" fill="#f25022" /><path d="M13 11h4v4h-4z" fill="#7fba00" /><path d="M7 17h4v4H7z" fill="#00a4ef" /><path d="M13 17h4v4h-4z" fill="#ffb900" /></> },
  { name: '文件资源管理器', state: '', art: <><path d="M1 3h8l2 3h12v16H1z" fill="#f5cf62" /><path d="M2 8h20v8H2z" fill="#fbe29a" /><path d="M6 22v-6q0-2 2-2h8q2 0 2 2v6h-3v-4H9v4z" fill="#3f9ee0" /></> },
  { name: 'Internet Explorer', state: '', art: <><path d="M5 14h14q0-8-7-8t-7 8 7 7q5 0 7-4" fill="none" stroke="#38a8ee" strokeWidth="4" /><path d="M3 22Q-1 14 9 6t13-4q2 3-2 8" fill="none" stroke="#f7c62e" strokeWidth="2" /></> },
  { name: '编辑器', state: 'open', art: <><rect width="24" height="24" rx="3" fill="#f5a01e" /><path d="M4 5h12v15H4z" fill="#fff8e8" /><path d="M7 10h6M7 13h5M7 16h4" stroke="#c87a28" /><path d="M10 16l9-12 2 2-9 11z" fill="#943a1a" /></> },
  { name: 'GGJ2013', state: 'active', art: <><rect width="24" height="24" rx="4" fill="#1296f0" /><path d="M12 4v11q0 5 4 3M5 12h14M5 12q0 6 7 7M12 5q6 1 7 7M12 5h3" fill="none" stroke="#fff" strokeWidth="2" /></> },
  { name: '广联达G', state: 'open', art: <path d="M22 2Q9-1 4 7T6 20q7 6 14 0 4-7-2-11-6-1-7 4 3-1 4 1 0 3-3 2-5-2-3-7T22 2z" fill="#1f9cf0" /> },
  { name: '360浏览器', state: 'open', art: <><circle cx="12" cy="12" r="11" fill="#5db82c" /><path d="M6 13h11q0-6-5-6t-6 6 6 5q3 0 5-2" fill="none" stroke="#fff" strokeWidth="3" /><path d="M3 18Q14 17 22 5" stroke="#cdf0a8" fill="none" /></> },
  { name: '图册', state: 'open', art: <><rect width="24" height="24" rx="3" fill="#1c7fd6" /><path d="M3 9h8v10H3zM13 9h8v10h-8z" fill="#eef6ff" /><circle cx="14" cy="8" r="4" fill="#b6dcfa" stroke="#fff" /><path d="M5 13h4M5 16h4M15 16h4" stroke="#8aa" /></> },
];

const Taskbar = () => (
  <div className="flex h-10 items-stretch overflow-hidden bg-[#020d11] text-white">
    <button type="button" aria-label="开始" className="flex w-12 shrink-0 items-center justify-center bg-black">
      <svg viewBox="0 0 16 16" className="h-4 w-4"><path d="M0 2.500L7 1.500V7.500H0zM8 1.300L16 0v7.500H8zM0 8.500h7v6L0 13.500zM8 8.500h8V16L8 14.700z" fill="#fff" /></svg>
    </button>
    <div className="flex w-[344px] shrink-0 items-center bg-[#333] pl-[9px]">
      <svg viewBox="0 0 20 20" className="h-5 w-5"><circle cx="10" cy="10" r="8.500" fill="none" stroke="#fff" strokeWidth="2.500" /></svg>
      <input aria-label="搜索" placeholder="在这里输入你要搜索的内容" className="ml-[7px] flex-1 bg-transparent text-[14px] outline-none placeholder:text-[#999]" />
      <Mic className="mr-3 h-[18px] w-[18px] text-[#999]" strokeWidth={1.5} />
    </div>
    <button type="button" aria-label="任务视图" className="flex w-[50px] shrink-0 items-center justify-center">
      <svg viewBox="0 0 20 16" className="h-4 w-5"><path d="M4.500 1.500h11v13h-11zM3 3.500H.5v9H3M17 3.500h2.500v9H17" fill="none" stroke="#fff" /></svg>
    </button>
    {pinned.map((p) => (
      <button type="button" key={p.name} aria-label={p.name} className="flex w-[50px] shrink-0 items-center justify-center">
        <svg viewBox="0 0 24 24" className="h-[22px] w-[22px]">{p.art}</svg>
      </button>
    ))}
    <div className="-ml-1 flex shrink-0">
      {apps.map((a) => (
        <button type="button" key={a.name} aria-label={a.name} className={clsx('flex w-[42px] shrink-0 items-center justify-center', a.state === 'active' && 'bg-[#333f45]')}>
          <span className={clsx('flex h-full items-center justify-center border-b-2 pt-0.5', a.state === 'active' ? 'w-full' : 'w-[34px]', a.state ? 'border-[#76b9ed]' : 'border-transparent')}>
            <svg viewBox="0 0 24 24" className="h-6 w-6">{a.art}</svg>
          </span>
        </button>
      ))}
    </div>
    <div className="ml-auto flex items-center">
      <div className="mr-5 text-center leading-[17px]">26%<br />CPU使用</div>
      <svg viewBox="0 0 12 8" className="mr-2 h-2 w-3"><path d="M1 7l5-5 5 5" fill="none" stroke="#fff" strokeWidth="1.300" /></svg>
      <svg viewBox="0 0 18 14" className="mr-[9px] h-[14px] w-[18px]"><path d="M4 5h12v7H4zM16 7h1.500v3H16M2 1v3M5 1v3M1 4h5v3H3v4" fill="none" stroke="#fff" /><path d="M6 7h8v3H6z" fill="#fff" /></svg>
      <svg viewBox="0 0 14 14" className="mr-1.5 h-[14px] w-[14px]"><path d="M1 13Q1 2 13 1M4 13Q5 5 13 4.500M7 13Q8 8 13 8" fill="none" stroke="#bbb" /><path d="M10 13q0-3 3-3v3z" fill="#fff" /></svg>
      <svg viewBox="0 0 18 14" className="mr-[9px] h-[14px] w-[18px]"><path d="M1 5h3l3-3v10L4 9H1zM9 5q2 2 0 4M11.500 3q4 4 0 8M14 1.500q5 5.500 0 11" fill="none" stroke="#fff" /></svg>
      <svg viewBox="0 0 24 14" className="mr-2.5 h-[14px] w-6"><path d="M.5.500h23v13H.5z" fill="none" stroke="#fff" /><path d="M3 4h18M3 7h18" stroke="#fff" strokeDasharray="2 1" /><path d="M6 10.500h12" stroke="#fff" /></svg>
      <span className="mr-3 text-[13px]">中</span>
      <svg viewBox="0 0 16 16" className="h-4 w-4"><path d="M2 0l14 2-2 14L0 13z" fill="#e8431f" /><path d="M12 4Q5 3 5 6t6 3-6 3" fill="none" stroke="#fff" strokeWidth="2" /></svg>
      <time dateTime="2017-11-24T20:33" className="ml-[14px] w-[66px] text-center leading-[19px]">20:33<br />2017/11/24</time>
      <button type="button" aria-label="通知" className="relative mr-[11px] ml-3.5 h-8 w-7">
        <svg viewBox="0 0 16 16" className="h-4 w-4"><path d="M0 0h16v12h-4l-4 4v-4H0z" fill="#fff" /><path d="M3 4h10M3 7h10" stroke="#111" strokeWidth="1.500" /></svg>
        <span className="absolute top-2 left-1.5 flex h-5 w-5 items-center justify-center rounded-full border border-[#999] bg-[#444] text-[11px] font-bold">21</span>
      </button>
    </div>
    <div className="w-1 border-l border-[#555]" />
  </div>
);

const ImeBar = () => (
  <div className="absolute top-0 left-[868px] flex items-center">
    <svg viewBox="0 0 28 28" className="z-10 h-7 w-7"><path d="M1 3Q10 0 22 1q3 0 3 4l2 17q-9 4-20 4-3-1-3-4z" fill="#f04e23" /><path d="M21 7Q9 4 9 9t11 5-10 7" fill="none" stroke="#fff" strokeWidth="3.500" /></svg>
    <div className="-ml-2 flex h-6 w-[164px] items-center gap-[7px] border border-[#a9c3d8] bg-[#f8fbfe] pl-[13px] text-[15px] font-bold text-[#1f6fc0]">
      <span>中</span>
      <svg viewBox="0 0 14 14" className="h-[14px] w-[14px]"><circle cx="3" cy="4" r="2" fill="none" stroke="#1f6fc0" strokeWidth="1.300" /><path d="M9 6h3q1 4-3 6 1-2 1-3H9z" fill="#1f6fc0" /></svg>
      <svg viewBox="0 0 12 16" className="h-4 w-3"><rect x="3.500" y="0" width="5" height="9" rx="2.500" fill="#1f6fc0" /><path d="M1 6q0 5 5 5t5-5M6 11v4M3 15h6" fill="none" stroke="#1f6fc0" strokeWidth="1.500" /></svg>
      <svg viewBox="0 0 16 12" className="h-3 w-4"><path d="M0 0h16v12H0z" fill="#1f6fc0" /><path d="M2 3h12M2 6h12" stroke="#fff" strokeWidth="1.500" strokeDasharray="2 1" /><path d="M4 9h8" stroke="#fff" /></svg>
      <svg viewBox="0 0 16 16" className="h-4 w-4"><circle cx="6" cy="4" r="3.500" fill="#b7c1cc" /><path d="M0 13q0-6 6-6t6 6z" fill="#b7c1cc" /><path d="M6.500 8.500h9v7h-9z" fill="#fff" stroke="#99a" /><path d="M9 10v4M11 10h2v4" stroke="#99a" fill="none" /></svg>
      <svg viewBox="0 0 14 14" className="h-[14px] w-[14px]"><path d="M4 1q3 2 6 0l4 3-2 3-1-1v8H3V6L2 7 0 4z" fill="#1f6fc0" /></svg>
      <svg viewBox="0 0 14 14" className="h-[14px] w-[14px]"><path d="M1 11l7-6q-1-4 4-5L9 3l2 2 3-2q0 5-5 5l-6 6q-3 0-2-3z" fill="#1f6fc0" /></svg>
    </div>
  </div>
);

const SpeedBall = () => (
  <div className="absolute top-[55px] left-[887px] flex items-center">
    <div className="z-10 flex h-[50px] w-[50px] items-center justify-center rounded-full border-2 border-[#777] bg-linear-to-b from-[#2d7a52] from-30% to-[#3fcf5c] to-30% text-[14px] text-white shadow-md ring-2 ring-white ring-inset">68%</div>
    <div className="-ml-8 flex h-[38px] w-[109px] items-center rounded-r-full border border-[#aaa] bg-[#e6e6e6] pl-[37px] text-[10px] leading-[15px] shadow-lg">
      <div className="text-[12px] font-bold"><div className="text-[#e8502f]">↑</div><div className="text-[#1fa050]">↓</div></div>
      <div className="ml-3 pt-0.5 text-right whitespace-nowrap">0K/s<br />0K/s</div>
    </div>
    <svg viewBox="0 0 18 18" className="absolute top-4 right-1.5 h-[18px] w-[18px]"><circle cx="8" cy="10" r="8" fill="#2f7de0" /><path d="M8 6v8M4 10h8" stroke="#fff" strokeWidth="2" /><circle cx="14" cy="4" r="3.500" fill="#d22" /></svg>
  </div>
);

const App = () => (
  <div className="relative flex min-h-screen flex-col overflow-x-hidden bg-[#f0f0f0] font-['Open_Sans','Noto_Sans_CJK_SC',sans-serif] text-[12px] leading-4 text-black">
    <TitleBar />
    <MenuBar />
    <MainTools />
    <main className="mt-px flex flex-1">
      <Sidebar />
      <div className="ml-1 flex min-w-0 flex-1 flex-col">
        <EditTools />
        <PartTools />
        <DrawTools />
        <div className="relative mt-px h-[305px] overflow-hidden bg-black">
          <Drawing />
          <DisplayPanel />
        </div>
        <SnapBar />
        <RebarPanel />
      </div>
    </main>
    <StatusBar />
    <Taskbar />
    <ImeBar />
    <SpeedBall />
  </div>
);

export default App;
